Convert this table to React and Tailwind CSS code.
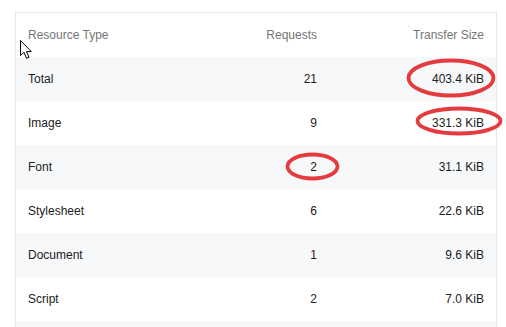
import React from "react";

const rows = [
  { type: "Total", requests: "21", size: "403.4 KiB" },
  { type: "Image", requests: "9", size: "331.3 KiB" },
  { type: "Font", requests: "2", size: "31.1 KiB" },
  { type: "Stylesheet", requests: "6", size: "22.6 KiB" },
  { type: "Document", requests: "1", size: "9.6 KiB" },
  { type: "Script", requests: "2", size: "7.0 KiB" },
];

export default function App() {
  return (
    <div
      className="relative w-[506px] h-[327px] overflow-hidden bg-white pl-[15px] pt-[12px]"
      style={{ fontFamily: '"Liberation Sans", Arial, sans-serif' }}
    >
      <div className="w-[482px] border border-[#e6e6e6] text-[12px]">
        <div className="grid grid-cols-[1fr_120px_167px] items-center h-[44px] pl-[12px] pr-[12px] text-[#757575]">
          <div>Resource Type</div>
          <div className="text-right">Requests</div>
          <div className="text-right">Transfer Size</div>
        </div>
        {rows.map((r, i) => (
          <div
            key={r.type}
            className={
              "grid grid-cols-[1fr_120px_167px] items-center h-[44px] pl-[12px] pr-[12px] text-[#212121] " +
              (i % 2 === 0 ? "bg-[#f7f8fa]" : "bg-white")
            }
          >
            <div>{r.type}</div>
            <div className="text-right">{r.requests}</div>
            <div className="text-right">{r.size}</div>
          </div>
        ))}
        <div className="h-[44px] bg-[#f7f8fa]" />
      </div>

      {/* red annotation circles */}
      <svg
        className="absolute left-0 top-0 pointer-events-none"
        width="506"
        height="327"
        viewBox="0 0 506 327"
      >
        <g fill="none" stroke="#e43b3f" strokeWidth="3.8">
          <ellipse cx="451" cy="78" rx="42.5" ry="17.5" />
          <ellipse cx="459" cy="121" rx="41.5" ry="12.5" />
          <ellipse cx="312.5" cy="166.5" rx="25" ry="12" />
        </g>
      </svg>

      {/* mouse cursor */}
      <svg
        className="absolute left-[19px] top-[39px]"
        width="15"
        height="21"
        viewBox="0 0 15 21"
      >
        <path
          d="M1.5 1.5 L1.5 16.5 L5 13.3 L7.6 19.3 L10 18.3 L7.5 12.6 L12.3 12.6 Z"
          fill="#fff"
          stroke="#000"
          strokeWidth="1"
          strokeLinejoin="miter"
        />
      </svg>
    </div>
  );
}
